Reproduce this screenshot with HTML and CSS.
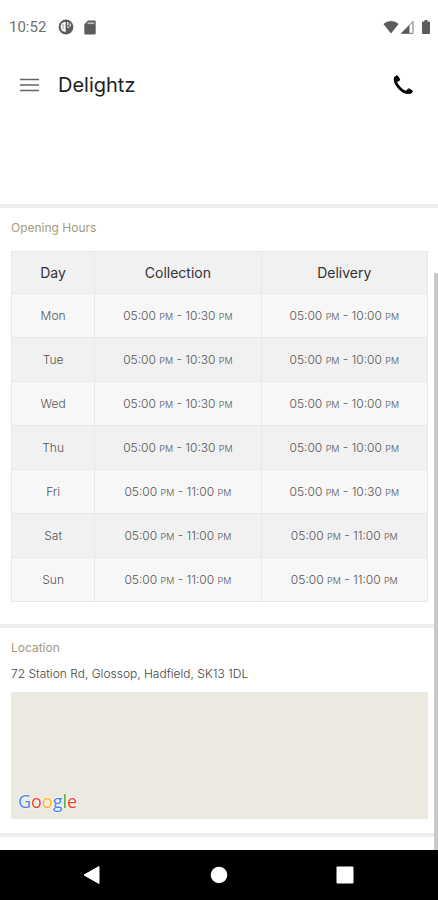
FILE: index.html
```html
<!DOCTYPE html>
<html lang="en">
<head>
<meta charset="utf-8">
<meta name="viewport" content="width=device-width, initial-scale=1">
<title>Delightz</title>
<link rel="stylesheet" href="styles.css">
</head>
<body>
<div class="status">
  <span class="clock">10:52</span>
  <svg class="status-icon" width="16" height="16" viewBox="0 0 16 16"><circle cx="8" cy="8" r="7.400" fill="#5c5c5c"/><path d="M7.600 3C4.200 3 2.600 5.300 2.700 8s1.600 4.700 4.900 5z" fill="#fff"/><path d="M5 5v5.500" stroke="#999" stroke-width="1"/><path d="M9 3h1.500v3.200H9zM11.600 4.500H13v3h-1.400zM9 7.600h2.400v1.200H9z" fill="#ddd"/></svg>
  <svg class="status-icon" width="12" height="15" viewBox="0 0 12 15"><path d="M4 .5h6.500q1.200 0 1.200 1.200v11.600q0 1.200-1.200 1.200h-9Q.3 14.500.3 13.300V4.300z" fill="#5c5c5c"/><path d="M3.500 3.200h6.800" stroke="#bbb" stroke-width="1.800"/></svg>
  <span class="grow"></span>
  <svg width="16" height="14" viewBox="0 0 16 14"><path d="M8 13.500.4 4Q3.500 1 8 1t7.600 3z" fill="#5c5c5c"/></svg>
  <svg class="signal" width="14" height="14" viewBox="0 0 14 14"><path d="M1.500 13.300H13V1.500z" fill="#fff" stroke="#777"/><path d="M1 13.500h8.500V5z" fill="#5c5c5c"/></svg>
  <svg class="battery" width="8" height="14" viewBox="0 0 8 14"><path d="M2.500 0h3v1.500H7q1 0 1 1V13q0 1-1 1H1q-1 0-1-1V2.500q0-1 1-1h1.500z" fill="#5c5c5c"/></svg>
</div>
<header class="appbar">
  <button class="icon-button" type="button" aria-label="Menu"><svg width="20" height="14" viewBox="0 0 20 14"><path d="M0 1.500h19M0 7h19M0 12.500h19" stroke="#666" stroke-width="1.600"/></svg></button>
  <h1>Delightz</h1>
  <button class="icon-button" type="button" aria-label="Call"><svg width="20" height="20" viewBox="0 0 20 20"><path d="M2.400 3.200C1.500 6.500 4 10.500 7 13.400s6.800 5 10 3.800" fill="none" stroke="#000" stroke-width="2.800" stroke-linecap="round"/><path d="M3.300.6 1 2.400l3.600 4.700 2-1.500c.6-.5.700-1.200.3-1.800L5 1C4.600.3 3.900.1 3.300.6zM12.500 16.300l4.600 2.700 2.300-1.700c.6-.5.600-1.200 0-1.700l-2.600-1.900c-.6-.4-1.300-.4-1.800.1z" fill="#000"/></svg></button>
</header>
<main>
  <section class="hours">
    <h2>Opening Hours</h2>
    <table>
      <thead><tr><th class="day">Day</th><th>Collection</th><th>Delivery</th></tr></thead>
      <tbody>
        <tr><td>Mon</td><td>05:00 <small>PM</small> - 10:30 <small>PM</small></td><td>05:00 <small>PM</small> - 10:00 <small>PM</small></td></tr>
        <tr><td>Tue</td><td>05:00 <small>PM</small> - 10:30 <small>PM</small></td><td>05:00 <small>PM</small> - 10:00 <small>PM</small></td></tr>
        <tr><td>Wed</td><td>05:00 <small>PM</small> - 10:30 <small>PM</small></td><td>05:00 <small>PM</small> - 10:00 <small>PM</small></td></tr>
        <tr><td>Thu</td><td>05:00 <small>PM</small> - 10:30 <small>PM</small></td><td>05:00 <small>PM</small> - 10:00 <small>PM</small></td></tr>
        <tr><td>Fri</td><td>05:00 <small>PM</small> - 11:00 <small>PM</small></td><td>05:00 <small>PM</small> - 10:30 <small>PM</small></td></tr>
        <tr><td>Sat</td><td>05:00 <small>PM</small> - 11:00 <small>PM</small></td><td>05:00 <small>PM</small> - 11:00 <small>PM</small></td></tr>
        <tr><td>Sun</td><td>05:00 <small>PM</small> - 11:00 <small>PM</small></td><td>05:00 <small>PM</small> - 11:00 <small>PM</small></td></tr>
      </tbody>
    </table>
  </section>
  <section class="location">
    <h2>Location</h2>
    <p>72 Station Rd, Glossop, Hadfield, SK13 1DL</p>
    <div class="map"><span class="google"><span class="blue">G</span><span class="red">o</span><span class="yellow">o</span><span class="blue">g</span><span class="green">l</span><span class="red">e</span></span></div>
  </section>
  <div class="divider"></div>
  <div class="scrollbar"></div>
</main>
<nav class="navbar">
  <button type="button" aria-label="Back"><svg width="18" height="20" viewBox="0 0 18 20"><path d="M1 10 16 1.500v17z" fill="#fff" stroke="#fff" stroke-linejoin="round"/></svg></button>
  <button type="button" aria-label="Home"><svg width="18" height="18" viewBox="0 0 18 18"><circle cx="9" cy="9" r="8.300" fill="#fff"/></svg></button>
  <button type="button" aria-label="Recent apps"><svg width="18" height="18" viewBox="0 0 18 18"><rect x=".5" y=".5" width="17" height="17" rx="1" fill="#fff"/></svg></button>
</nav>
</body>
</html>
```
FILE: styles.css
```css
* { box-sizing: border-box; }
body {
  margin: 0;
  min-height: 100vh;
  display: flex;
  flex-direction: column;
  background: #fff;
  color: #555;
  font: 12px/16px Inter, "Liberation Sans", sans-serif;
}
button {
  display: flex;
  padding: 0;
  border: 0;
  background: none;
}
h1, h2, p { margin: 0; font-weight: 400; }
.status {
  display: flex;
  align-items: center;
  height: 54px;
  padding: 0 8px 0 9px;
}
.clock {
  margin-right: 2px;
  font: 15px/20px Roboto, sans-serif;
  color: #707070;
}
.status-icon { margin-left: 10px; }
.grow { flex: 1; }
.signal { margin-left: 1px; }
.battery { margin-left: 8px; }
.appbar {
  display: flex;
  align-items: center;
  height: 62px;
  padding: 0 25px 0 20px;
}
.appbar h1 {
  flex: 1;
  margin-left: 18px;
  font-size: 20px;
  line-height: 24px;
  color: #222;
}
main {
  position: relative;
  flex: 1;
  padding-top: 88px;
}
section {
  padding: 12px 10px 0 11px;
  border-top: 4px solid #eee;
}
h2 {
  font-size: 12px;
  line-height: 16px;
  color: #a59a78;
}
.hours { padding-bottom: 22px; }
table {
  width: 100%;
  margin-top: 15px;
  border-collapse: collapse;
  table-layout: fixed;
  text-align: center;
}
th, td {
  height: 44px;
  padding: 0;
  border: 1px solid #e8e8e8;
}
th {
  height: 42px;
  font-size: 14px;
  font-weight: 400;
  color: #333;
  background: #f1f1f1;
}
.day { width: 20%; }
td { background: #f7f7f7; font-weight: 300; }
tr:nth-child(even) td { background: #f1f1f1; }
small { font-size: 9px; line-height: 9px; }
.location p { margin-top: 10px; color: #444; font-weight: 300; }
.map {
  display: flex;
  align-items: flex-end;
  height: 127px;
  margin-top: 10px;
  padding: 0 7px 7px;
  background: #ebe9e0;
}
.google {
  font: 18px/22px "Open Sans", sans-serif;
  font-weight: 500;
  text-shadow: 0 0 1px #fff, 0 0 2px #fff, 0 0 2px #fff;
}
.blue { color: #4285f4; }
.red { color: #ea4335; }
.yellow { color: #fbbc05; }
.green { color: #34a853; }
.divider { height: 4px; margin-top: 14px; background: #eee; }
.scrollbar {
  position: absolute;
  top: 157px;
  right: 0;
  bottom: 0;
  width: 4px;
  background: #c9c9c9;
}
.navbar {
  display: flex;
  justify-content: space-between;
  align-items: center;
  height: 50px;
  padding: 0 84px 0 83px;
  background: #000;
}
```
